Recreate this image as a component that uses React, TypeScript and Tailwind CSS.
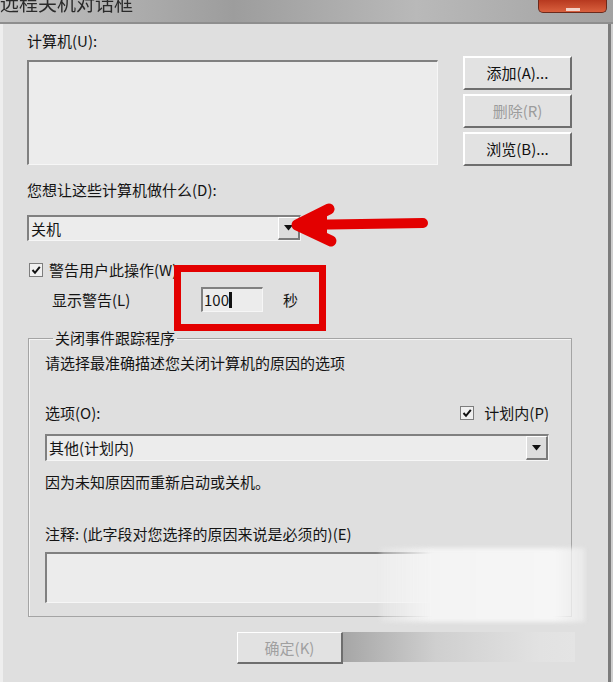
import React from "react";

function Check() {
    return (
        <span className="flex h-[14px] w-[14px] items-center justify-center border border-[#7d7d7d] bg-[#f0f0f0]">
            <svg width="10" height="10" viewBox="0 0 10 10">
                <path d="M1.5 5 L4 7.8 L8.8 1.8" fill="none" stroke="#111" strokeWidth="2" />
            </svg>
        </span>
    );
}

function DropButton() {
    return (
        <span className="flex h-full w-[22px] items-center justify-center border-t border-l border-t-white border-l-white border-r-2 border-b-2 border-r-[#7a7a7a] border-b-[#7a7a7a] bg-[#dcdcdc]">
            <svg width="9" height="6" viewBox="0 0 9 6">
                <path d="M0 0 H9 L4.5 5.5 Z" fill="#111" />
            </svg>
        </span>
    );
}

function Btn({ children, disabled }: { children: React.ReactNode; disabled?: boolean }) {
    return (
        <div
            className={
                "flex h-[34px] w-[109px] items-center justify-center border-t-2 border-l-2 border-r-2 border-b-2 border-t-white border-l-white border-r-[#6e6e6e] border-b-[#6e6e6e] bg-[#e2e2e2] text-[15px] " +
                (disabled ? "text-[#9c9c9c]" : "text-[#111]")
            }
        >
            {children}
        </div>
    );
}

export default function App() {
    return (
        <div className="relative flex h-[682px] w-[613px] flex-col overflow-hidden bg-[#dfdfdf] font-['Noto_Sans_CJK_SC',sans-serif] text-[15px] leading-[18px] text-[#141414]">
            {/* title bar */}
            <div className="flex h-[22px] items-start bg-[linear-gradient(to_right,#c2c2c2_0%,#9d9d9d_38%,#b9b9b9_68%,#a2a2a2_100%)]">
                <span className="-mt-[8px] text-[19px] leading-[22px] text-[#2a2a2a] blur-[0.4px]">远程关机对话框</span>
                <div className="ml-auto mr-[6px] flex h-[13px] w-[69px] items-end justify-center rounded-b-[5px] border border-t-0 border-[#6b2a1c] bg-[linear-gradient(to_bottom,#b7391f,#d9603e)]">
                    <span className="mb-[1px] h-[3px] w-[14px] bg-[#f3d2c8]" />
                </div>
            </div>

            <div className="flex flex-1 border-t-2 border-[#8e8e8e]">
                <div className="w-[3px] bg-[#eeeeee]" />
                <div className="flex flex-1 flex-col pl-[24px] pt-[8px]">
                    <div>计算机(U):</div>

                    <div className="mt-[6px] flex items-start">
                        <div className="mt-[4px] h-[105px] w-[411px] border-t-2 border-l-2 border-r border-b border-t-[#808080] border-l-[#808080] border-r-[#f6f6f6] border-b-[#f6f6f6] bg-[#ececec]" />
                        <div className="ml-[25px] flex flex-col gap-[4px]">
                            <Btn>添加(A)...</Btn>
                            <Btn disabled>删除(R)</Btn>
                            <Btn>浏览(B)...</Btn>
                        </div>
                    </div>

                    <div className="mt-[15px]">您想让这些计算机做什么(D):</div>
                    <div className="mt-[16px] flex h-[26px] w-[274px] items-center border-t-2 border-l-2 border-r border-b border-t-[#808080] border-l-[#808080] border-r-[#f6f6f6] border-b-[#f6f6f6] bg-[#ececec]">
                        <span className="flex-1 pl-[2px]">关机</span>
                        <DropButton />
                    </div>

                    <div className="mt-[20px] flex items-center gap-[6px] pl-[2px]">
                        <Check />
                        <span>警告用户此操作(W)</span>
                    </div>
                    <div className="mt-[8px] flex items-center pl-[25px]">
                        <span className="w-[149px]">显示警告(L)</span>
                        <div className="flex h-[25px] w-[62px] items-center border-t-2 border-l-2 border-r border-b border-t-[#808080] border-l-[#808080] border-r-[#f6f6f6] border-b-[#f6f6f6] bg-[#ececec] pl-[1px]">
                            <span>100</span>
                            <span className="h-[16px] w-[3px] bg-[#111]" />
                        </div>
                        <span className="ml-[20px]">秒</span>
                    </div>

                    <fieldset className="ml-[1px] mt-[17px] w-[544px] border border-[#a4a4a4] pb-[13px] pl-[16px] pr-[22px] shadow-[inset_1px_1px_0_#f4f4f4]">
                        <legend className="ml-[8px] px-[2px]">关闭事件跟踪程序</legend>
                        <div className="mt-[7px]">请选择最准确描述您关闭计算机的原因的选项</div>
                        <div className="mt-[32px] flex items-center">
                            <span>选项(O):</span>
                            <span className="ml-auto flex items-center gap-[10px]">
                                <Check />
                                <span>计划内(P)</span>
                            </span>
                        </div>
                        <div className="mt-[12px] flex h-[27px] items-center border-t-2 border-l-2 border-r border-b border-t-[#808080] border-l-[#808080] border-r-[#f6f6f6] border-b-[#f6f6f6] bg-[#ececec]">
                            <span className="flex-1 pl-[2px]">其他(计划内)</span>
                            <DropButton />
                        </div>
                        <div className="mt-[12px]">因为未知原因而重新启动或关机。</div>
                        <div className="mt-[34px]">注释: (此字段对您选择的原因来说是必须的)(E)</div>
                        <div className="mt-[9px] h-[51px] border-t-2 border-l-2 border-r border-b border-t-[#808080] border-l-[#808080] border-r-[#f6f6f6] border-b-[#f6f6f6] bg-[#ececec]" />
                    </fieldset>

                    <div className="ml-[210px] mt-[15px] flex">
                        <div className="flex h-[32px] w-[106px] items-center justify-center border-t border-l border-t-white border-l-white border-r-2 border-b-2 border-r-[#6e6e6e] border-b-[#6e6e6e] bg-[#e2e2e2] text-[#a0a0a0]">
                            确定(K)
                        </div>
                        <div className="h-[30px] w-[232px] bg-[linear-gradient(to_right,#a6a6a6,#cfcfcf_40%,#e2e2e2_85%,#e4e4e4)]" />
                    </div>
                </div>
                <div className="w-[3px] bg-[#7c7c7c]" />
                <div className="w-[2px] bg-[#cfcfcf]" />
            </div>

            {/* watermark haze */}
            <div className="absolute left-[380px] top-[548px] h-[74px] w-[205px] bg-[linear-gradient(to_right,rgba(240,240,240,0.3),#f4f4f4_25%,#f6f6f6_85%,rgba(240,240,240,0.6))] blur-[2px]" />

            {/* red annotations */}
            <svg className="absolute left-[285px] top-[200px]" width="150" height="50" viewBox="0 0 150 50">
                <path d="M14 25 L138 23" stroke="#e30000" strokeWidth="10" strokeLinecap="round" fill="none" />
                <path d="M44 9 L12 25 L46 41" stroke="#e30000" strokeWidth="11" strokeLinecap="round" strokeLinejoin="round" fill="none" />
                <path d="M12 25 L42 13 L42 37 Z" fill="#e30000" />
            </svg>
            <div className="absolute left-[174px] top-[265px] h-[66px] w-[152px] border-[7px] border-[#e30000]" />
        </div>
    );
}
